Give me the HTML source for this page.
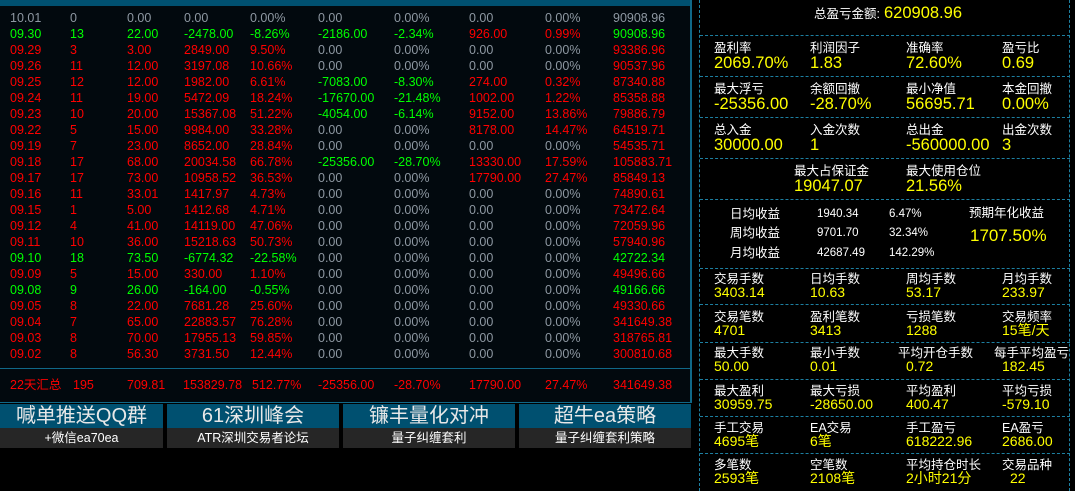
<!DOCTYPE html>
<html><head><meta charset="utf-8"><style>
*{margin:0;padding:0;box-sizing:border-box}
body{width:1075px;height:491px;background:#000;position:relative;overflow:hidden;font-family:"Liberation Sans","Noto Sans CJK SC",sans-serif;font-size:12.5px}
.a{position:absolute;white-space:nowrap;line-height:16px}
.g{color:#00ff00}.r{color:#ff0000}.z{color:#8e98a2}.w{color:#fff}.y{color:#ffff00}
.lbl{position:absolute;color:#fff;font-size:12.5px;line-height:14px;white-space:nowrap}
.val{position:absolute;color:#ffff00;font-size:16.5px;line-height:18px;white-space:nowrap}
.hd{position:absolute;left:700px;width:370px;border-top:1px dashed #1d7fa0;height:0}
.btn{position:absolute;top:404px;height:24px;background:#005070;color:#e8e8e8;font-size:20px;line-height:24px;text-align:center}
.btn2{position:absolute;top:428px;height:20px;background:#262626;color:#fff;font-size:12.5px;line-height:20px;text-align:center}
</style></head><body>
<div style="position:absolute;left:0;top:0;width:691px;height:403px;background:#02090e"></div>
<div style="position:absolute;left:0;top:0;width:691px;height:6px;background:#005070"></div>
<div style="position:absolute;left:690px;top:0;width:2px;height:403px;background:#106888"></div>
<div style="position:absolute;left:0;top:368px;width:691px;height:1px;background:#106888"></div>
<div style="position:absolute;left:0;top:402px;width:691px;height:1px;background:#106888"></div>
<div id="t"></div>
<div class="a r" style="top:377px;left:10px">22天汇总</div>
<div class="a r" style="top:377px;left:73px">195</div>
<div class="a r" style="top:377px;left:127px">709.81</div>
<div class="a r" style="top:377px;left:183px">153829.78</div>
<div class="a r" style="top:377px;left:252px">512.77%</div>
<div class="a r" style="top:377px;left:318px">-25356.00</div>
<div class="a r" style="top:377px;left:394px">-28.70%</div>
<div class="a r" style="top:377px;left:469px">17790.00</div>
<div class="a r" style="top:377px;left:545px">27.47%</div>
<div class="a r" style="top:377px;left:613px">341649.38</div>

<div class="btn" style="left:0;width:163px">喊单推送QQ群</div>
<div class="btn" style="left:167px;width:172px">61深圳峰会</div>
<div class="btn" style="left:343px;width:172px">镰丰量化对冲</div>
<div class="btn" style="left:519px;width:172px">超牛ea策略</div>
<div class="btn2" style="left:0;width:163px">+微信ea70ea</div>
<div class="btn2" style="left:167px;width:172px">ATR深圳交易者论坛</div>
<div class="btn2" style="left:343px;width:172px">量子纠缠套利</div>
<div class="btn2" style="left:519px;width:172px">量子纠缠套利策略</div>

<div style="position:absolute;left:699px;top:0;width:0;height:491px;border-left:1px dashed #1d7fa0"></div>
<div style="position:absolute;left:1069px;top:0;width:0;height:491px;border-left:1px dashed #1d7fa0"></div>
<div class="hd" style="top:35px"></div><div class="hd" style="top:76px"></div><div class="hd" style="top:117px"></div><div class="hd" style="top:158px"></div><div class="hd" style="top:199px"></div><div class="hd" style="top:268px"></div><div class="hd" style="top:304px"></div><div class="hd" style="top:342px"></div><div class="hd" style="top:379px"></div><div class="hd" style="top:416px"></div><div class="hd" style="top:453px"></div>

<div class="lbl" style="left:814px;top:7px">总盈亏金额:</div>
<div class="val" style="left:884px;top:4px">620908.96</div>
<div id="grid"></div>
<div class="lbl" style="left:794px;top:164px">最大占保证金</div><div class="val" style="left:794px;top:177px">19047.07</div>
<div class="lbl" style="left:906px;top:164px">最大使用仓位</div><div class="val" style="left:906px;top:177px">21.56%</div>

<div class="lbl" style="left:730px;top:207px">日均收益</div>
<div class="lbl" style="left:730px;top:226px">周均收益</div>
<div class="lbl" style="left:730px;top:246px">月均收益</div>
<div class="lbl" style="left:817px;top:207px;font-size:11.5px">1940.34</div>
<div class="lbl" style="left:817px;top:226px;font-size:11.5px">9701.70</div>
<div class="lbl" style="left:817px;top:246px;font-size:11.5px">42687.49</div>
<div class="lbl" style="left:889px;top:207px;font-size:11.5px">6.47%</div>
<div class="lbl" style="left:889px;top:226px;font-size:11.5px">32.34%</div>
<div class="lbl" style="left:889px;top:246px;font-size:11.5px">142.29%</div>
<div class="lbl" style="left:969px;top:206px">预期年化收益</div>
<div class="val" style="left:970px;top:227px;font-size:17px">1707.50%</div>
<script>
var rows=[
["10.01","0","0.00","0.00","0.00%","0.00","0.00%","0.00","0.00%","90908.96","zzzzzzzzzz"],
["09.30","13","22.00","-2478.00","-8.26%","-2186.00","-2.34%","926.00","0.99%","90908.96","ggggggggrrg"],
["09.29","3","3.00","2849.00","9.50%","0.00","0.00%","0.00","0.00%","93386.96","rrrrrzzzzr"],
["09.26","11","12.00","3197.08","10.66%","0.00","0.00%","0.00","0.00%","90537.96","rrrrrzzzzr"],
["09.25","12","12.00","1982.00","6.61%","-7083.00","-8.30%","274.00","0.32%","87340.88","rrrrrggrrr"],
["09.24","11","19.00","5472.09","18.24%","-17670.00","-21.48%","1002.00","1.22%","85358.88","rrrrrggrrr"],
["09.23","10","20.00","15367.08","51.22%","-4054.00","-6.14%","9152.00","13.86%","79886.79","rrrrrggrrr"],
["09.22","5","15.00","9984.00","33.28%","0.00","0.00%","8178.00","14.47%","64519.71","rrrrrzzrrr"],
["09.19","7","23.00","8652.00","28.84%","0.00","0.00%","0.00","0.00%","54535.71","rrrrrzzzzr"],
["09.18","17","68.00","20034.58","66.78%","-25356.00","-28.70%","13330.00","17.59%","105883.71","rrrrrggrrr"],
["09.17","17","73.00","10958.52","36.53%","0.00","0.00%","17790.00","27.47%","85849.13","rrrrrzzrrr"],
["09.16","11","33.01","1417.97","4.73%","0.00","0.00%","0.00","0.00%","74890.61","rrrrrzzzzr"],
["09.15","1","5.00","1412.68","4.71%","0.00","0.00%","0.00","0.00%","73472.64","rrrrrzzzzr"],
["09.12","4","41.00","14119.00","47.06%","0.00","0.00%","0.00","0.00%","72059.96","rrrrrzzzzr"],
["09.11","10","36.00","15218.63","50.73%","0.00","0.00%","0.00","0.00%","57940.96","rrrrrzzzzr"],
["09.10","18","73.50","-6774.32","-22.58%","0.00","0.00%","0.00","0.00%","42722.34","gggggzzzzg"],
["09.09","5","15.00","330.00","1.10%","0.00","0.00%","0.00","0.00%","49496.66","rrrrrzzzzr"],
["09.08","9","26.00","-164.00","-0.55%","0.00","0.00%","0.00","0.00%","49166.66","gggggzzzzg"],
["09.05","8","22.00","7681.28","25.60%","0.00","0.00%","0.00","0.00%","49330.66","rrrrrzzzzr"],
["09.04","7","65.00","22883.57","76.28%","0.00","0.00%","0.00","0.00%","341649.38","rrrrrzzzzr"],
["09.03","8","70.00","17955.13","59.85%","0.00","0.00%","0.00","0.00%","318765.81","rrrrrzzzzr"],
["09.02","8","56.30","3731.50","12.44%","0.00","0.00%","0.00","0.00%","300810.68","rrrrrzzzzr"]];
var xs=[10,70,127,184,250,318,394,469,545,613],h="";
rows.forEach(function(r,i){var c=r[10];if(i==1)c="gggggggrrg";for(var j=0;j<10;j++){h+='<div class="a '+c[j]+'" style="top:'+(10+i*16)+'px;left:'+xs[j]+'px">'+r[j]+'</div>';}});
document.getElementById("t").innerHTML=h;
var g=[[41,[["盈利率","2069.70%"],["利润因子","1.83"],["准确率","72.60%"],["盈亏比","0.69"]]],
[82,[["最大浮亏","-25356.00"],["余额回撤","-28.70%"],["最小净值","56695.71"],["本金回撤","0.00%"]]],
[123,[["总入金","30000.00"],["入金次数","1"],["总出金","-560000.00"],["出金次数","3"]]],
[272,[["交易手数","3403.14"],["日均手数","10.63"],["周均手数","53.17"],["月均手数","233.97"]]],
[310,[["交易笔数","4701"],["盈利笔数","3413"],["亏损笔数","1288"],["交易频率","15笔/天"]]],
[346,[["最大手数","50.00"],["最小手数","0.01"],["平均开仓手数","0.72"],["每手平均盈亏","182.45"]]],
[384,[["最大盈利","30959.75"],["最大亏损","-28650.00"],["平均盈利","400.47"],["平均亏损","-579.10"]]],
[421,[["手工交易","4695笔"],["EA交易","6笔"],["手工盈亏","618222.96"],["EA盈亏","2686.00"]]],
[458,[["多笔数","2593笔"],["空笔数","2108笔"],["平均持仓时长","2小时21分"],["交易品种","22"]]]];
var gx=[714,810,906,1002],gh="";
g.forEach(function(r){var big=r[0]<200;r[1].forEach(function(c,j){var lx=gx[j],vx=gx[j];
if(r[0]==346&&j==2){lx=898;vx=906}if(r[0]==346&&j==3){lx=994;vx=1002}if(r[0]==458&&j==3)vx=1010;
gh+='<div class="lbl" style="left:'+lx+'px;top:'+r[0]+'px">'+c[0]+'</div>';
gh+='<div class="val" style="left:'+vx+'px;top:'+(r[0]+(big?13:11))+'px;font-size:'+(big?16.5:14)+'px">'+c[1]+'</div>';});});
document.getElementById("grid").innerHTML=gh;
</script>
</body></html>
